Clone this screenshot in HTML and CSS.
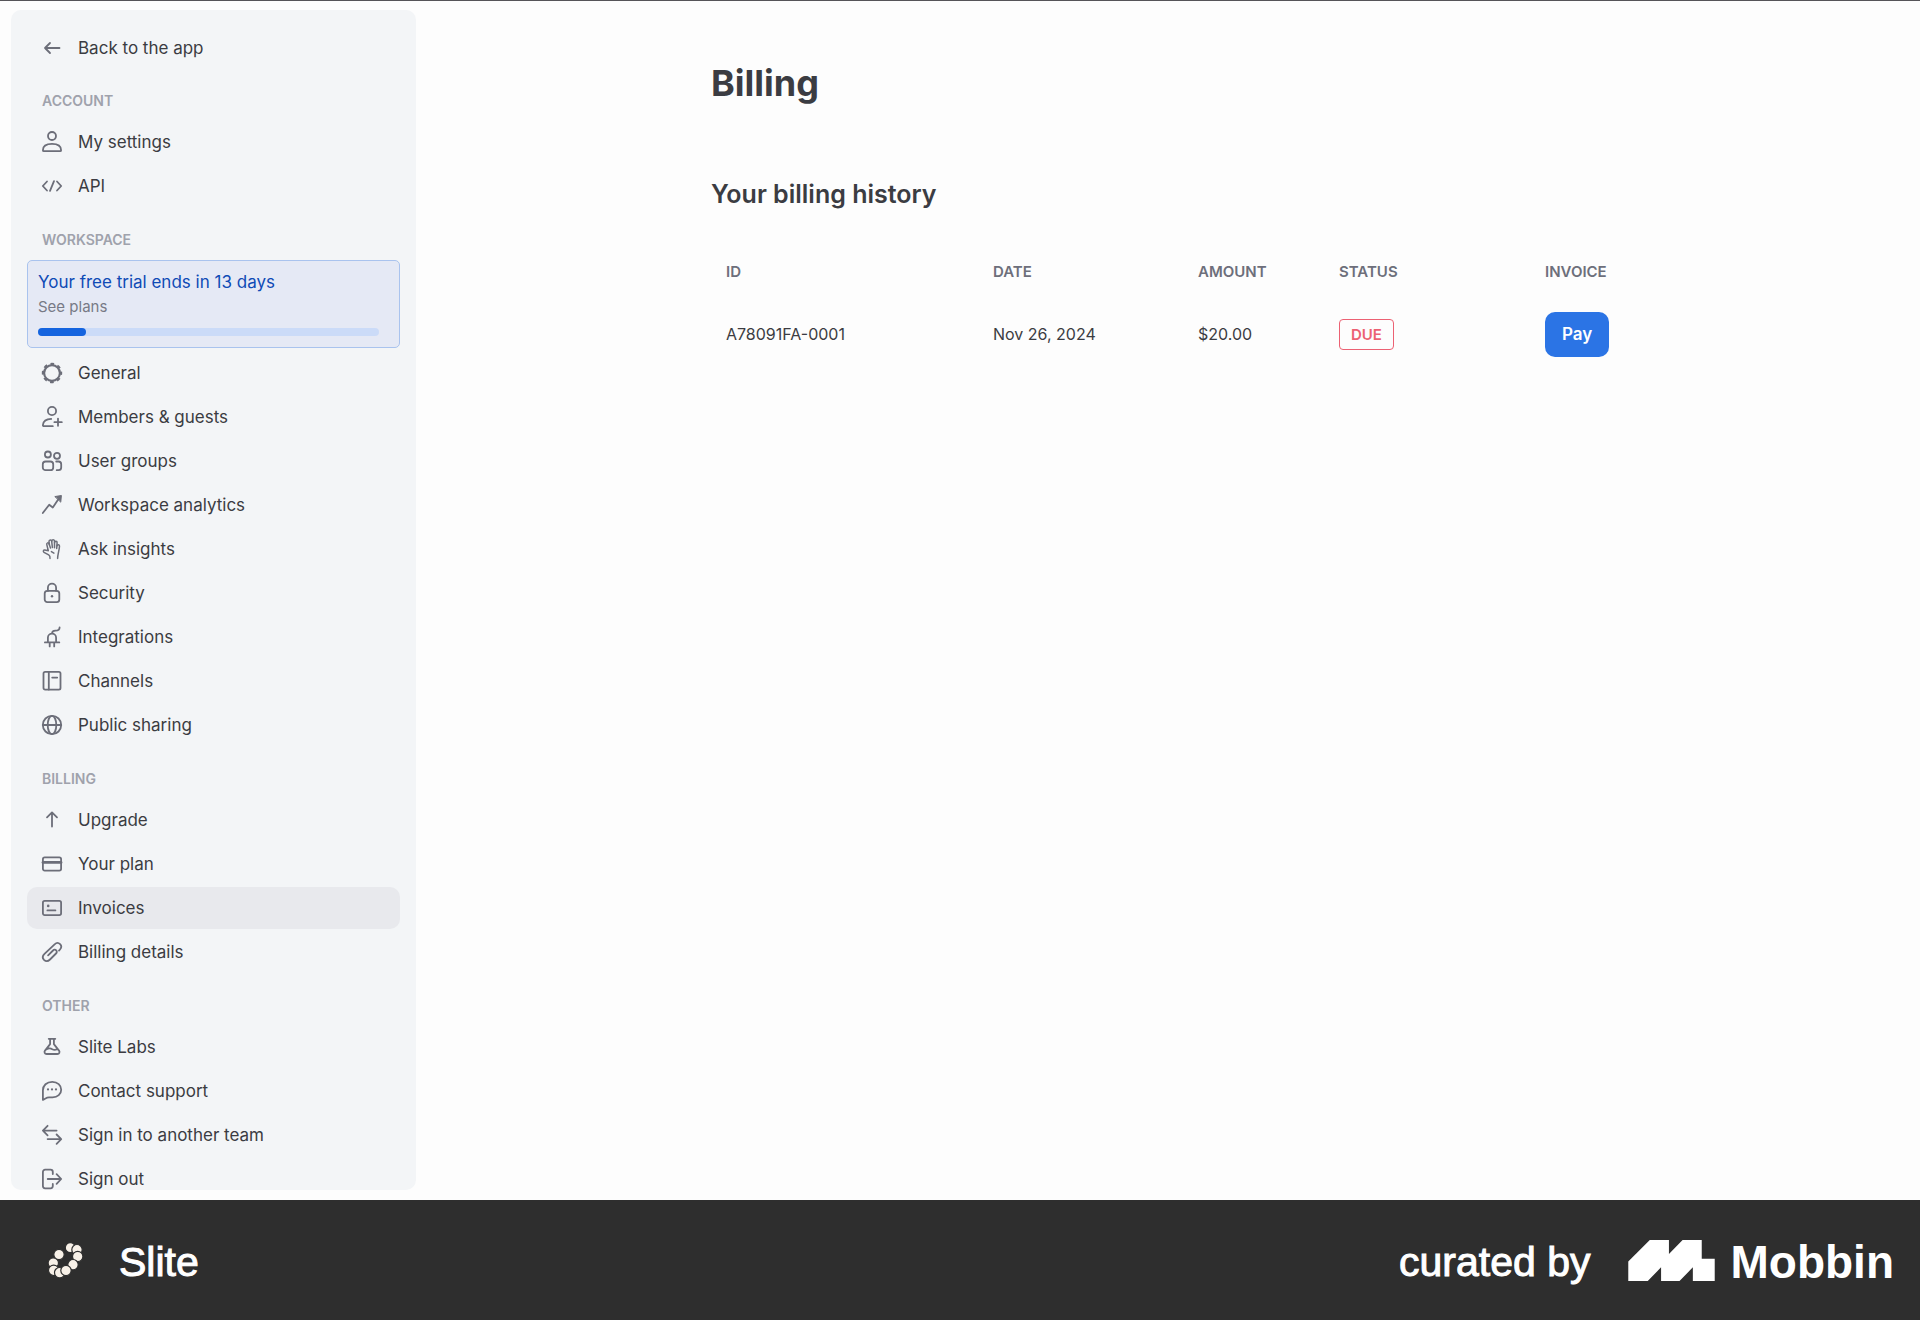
FILE: index.html
```html
<!DOCTYPE html>
<html lang="en">
<head>
    <meta charset="UTF-8">
    <meta name="viewport" content="width=device-width, initial-scale=1.0">
    <title>Billing - Slite</title>
    <link rel="stylesheet" href="styles.css">
</head>
<body>
    <div class="app">
        <nav class="sidebar">
            <a class="item" href="#">
                <svg class="icon" viewBox="0 0 20 20"><path d="M17.5 10H3M8 5l-5 5 5 5"/></svg>
                Back to the app
            </a>

            <h3>ACCOUNT</h3>
            <div class="list">
                <a class="item" href="#">
                    <svg class="icon" viewBox="0 0 20 20"><circle cx="10" cy="4" r="4"/><path d="M.9 18.2c0-3.9 3.2-6.4 9.1-6.4s9.1 2.5 9.1 6.4c0 .6-.4 1-1 1H1.9c-.6 0-1-.4-1-1z"/></svg>
                    My settings
                </a>
                <a class="item" href="#">
                    <svg class="icon" viewBox="0 0 20 20"><path d="M5 5.5L.8 10 5 14.5M15 5.5l4.2 4.5-4.2 4.5M12 5.2L8 14.8"/></svg>
                    API
                </a>
            </div>

            <h3>WORKSPACE</h3>
            <a class="trial" href="#">
                <span class="trialTitle">Your free trial ends in 13 days</span>
                <span class="trialLink">See plans</span>
                <span class="bar"><span class="barFill" style="width: 14%"></span></span>
            </a>
            <div class="list">
                <a class="item" href="#">
                    <svg class="icon" viewBox="0 0 20 20"><circle cx="10" cy="10" r="7.9" stroke-width="2.2"/><circle cx="10" cy="10" r="9.1" stroke-width="2.2" stroke-dasharray="3.6 3.55" stroke-dashoffset="1.8"/></svg>
                    General
                </a>
                <a class="item" href="#">
                    <svg class="icon" viewBox="0 0 20 20"><circle cx="10" cy="4" r="4.1"/><path d="M10.8 19.2H2c-.7 0-1.2-.4-1.1-1.2.4-3.8 3.5-6 8.3-6.1M16 11.6v7.2M12.4 15.2h7.4"/></svg>
                    Members &amp; guests
                </a>
                <a class="item" href="#">
                    <svg class="icon" viewBox="0 0 20 20"><circle cx="5.9" cy="3.5" r="3"/><circle cx="15" cy="4.8" r="3"/><rect x=".8" y="10.5" width="10.4" height="8.7" rx="2.8"/><path d="M14.2 10.5h2.3a2.7 2.7 0 0 1 2.7 2.7v3.3a2.7 2.7 0 0 1-2.7 2.7h-1.8"/></svg>
                    User groups
                </a>
                <a class="item" href="#">
                    <svg class="icon" viewBox="0 0 20 20"><path d="M.8 18l6.4-8.3 3.6 2.8L16.5 4"/><path class="solid" d="M13.2 1.500l6.200-1-.6 6.300z"/></svg>
                    Workspace analytics
                </a>
                <a class="item" href="#">
                    <svg class="icon" viewBox="0 0 20 20"><g stroke-width="1.5"><path d="M8 19.4c.2-1.600-.1-2.800-1.300-3.500L2 13.300c-1.200-.9-.6-2.400.8-2.200l3.500.6L4.800 5.600c-.4-1.900 1.700-2.400 2.300-.7L8.500 9"/><path d="M7.400 5.600L7 2.500c0-1.800 2.400-2 2.700-.2l.7 6.300"/><path d="M9.700 2.300c-.1-2.100 2.700-2.200 2.800-.2v6.700"/><path d="M12.600 3.500c.2-1.700 2.600-1.500 2.500.2L14.700 9.500"/><path d="M15 6.800c.3-1.600 2.700-1.300 2.500.4-.3 4.100-1.700 8-1.900 12.200"/><path d="M9.400 12.600l2.500 1.600"/></g></svg>
                    Ask insights
                </a>
                <a class="item" href="#">
                    <svg class="icon" viewBox="0 0 20 20"><rect x="2.700" y="7.900" width="14.600" height="11.200" rx="2.600"/><path d="M5.900 7.900V4.700a4.100 4.100 0 0 1 8.200 0v3.200"/><circle class="dot" cx="10" cy="13.300" r="1.200"/></svg>
                    Security
                </a>
                <a class="item" href="#">
                    <svg class="icon" viewBox="0 0 20 20"><path d="M2.900 15.400h14.400M5.900 15.400v-4.600a4.100 4.100 0 0 1 8.200 0v4.600M7.700 15.400v4M12.200 15.400v4M10 6.700c0-2.500 1.300-3.100 3.400-3.100 2.700 0 4.200-.6 4.200-3.200"/></svg>
                    Integrations
                </a>
                <a class="item" href="#">
                    <svg class="icon" viewBox="0 0 20 20"><rect x="1.500" y=".9" width="17" height="17.800" rx="1.600"/><path d="M6.800 1v17.600M10.200 6.600h5"/></svg>
                    Channels
                </a>
                <a class="item" href="#">
                    <svg class="icon" viewBox="0 0 20 20"><circle cx="10" cy="10" r="9.200"/><ellipse cx="10" cy="10" rx="4.300" ry="9.200"/><path d="M.8 10h18.400"/></svg>
                    Public sharing
                </a>
            </div>

            <h3>BILLING</h3>
            <div class="list">
                <a class="item" href="#">
                    <svg class="icon" viewBox="0 0 20 20"><path d="M10 16.500V2.700M5 7.400l5-5 5 5"/></svg>
                    Upgrade
                </a>
                <a class="item" href="#">
                    <svg class="icon" viewBox="0 0 20 20"><rect x=".9" y="3.400" width="18.200" height="13.200" rx="1.800"/><path d="M1 8.400h18" stroke-width="2.800"/></svg>
                    Your plan
                </a>
                <a class="item active" href="#">
                    <svg class="icon" viewBox="0 0 20 20"><rect x=".9" y="2.900" width="18.200" height="14.200" rx="1.800"/><path d="M5.400 12.400h8"/><circle class="dot" cx="6.200" cy="7.900" r="1.300"/></svg>
                    Invoices
                </a>
                <a class="item" href="#">
                    <svg class="icon" viewBox="0 0 20 20"><path d="M17 8.600l1-1.100c1.500-1.700 1.500-3.900.1-5.300-1.500-1.500-3.800-1.500-5.500.1L2.500 11.800c-1.900 1.800-2.100 4.300-.5 6 1.700 1.700 4.200 1.500 6-.3l6-6c1-1 1.100-2.300.2-3.200-.9-.9-2.200-.8-3.200.2l-4.900 4.900"/></svg>
                    Billing details
                </a>
            </div>

            <h3>OTHER</h3>
            <div class="list">
                <a class="item" href="#">
                    <svg class="icon" viewBox="0 0 20 20"><path d="M6.700 1.800h6.600M8.100 1.800v5.300L3 13.600c-1.100 1.600-.3 3.400 1.600 3.400h10.800c1.900 0 2.700-1.800 1.600-3.400l-5.100-6.500V1.800M4.600 12.300c2.400-1.500 4.500-.9 5.700-.1 1.300.8 3 .9 4.800.1"/></svg>
                    Slite Labs
                </a>
                <a class="item" href="#">
                    <svg class="icon" viewBox="0 0 20 20"><path d="M.9 18.900V9.300C.9 4.500 4.700.8 10.300.8c5.200 0 8.900 3.500 8.900 7.900s-3.600 7.700-8.600 7.700H7c-2.300 0-3.500 1.300-6.100 2.500z"/><circle class="dot" cx="6" cy="8.400" r="1.100"/><circle class="dot" cx="10" cy="8.400" r="1.100"/><circle class="dot" cx="14" cy="8.400" r="1.100"/></svg>
                    Contact support
                </a>
                <a class="item" href="#">
                    <svg class="icon" viewBox="0 0 20 20"><path d="M14.600 5.600H.9M5.600.8L.9 5.600l4.700 4.700M5.600 14.100h13.500M14.600 9.500l4.600 4.600-4.600 4.700"/></svg>
                    Sign in to another team
                </a>
                <a class="item" href="#">
                    <svg class="icon" viewBox="0 0 20 20"><path d="M10.800 5V2.900a2.200 2.200 0 0 0-2.200-2.200H3.100A2.200 2.200 0 0 0 .9 2.900v14.200a2.200 2.200 0 0 0 2.200 2.200h5.500a2.200 2.200 0 0 0 2.200-2.200V15M5.700 10h13.400M14.600 5.200l4.600 4.800-4.600 4.800"/></svg>
                    Sign out
                </a>
            </div>
        </nav>

        <main class="content">
            <div class="page">
                <h1>Billing</h1>
                <h2>Your billing history</h2>
                <table class="invoices">
                    <thead>
                        <tr>
                            <th class="colId">ID</th>
                            <th class="colDate">DATE</th>
                            <th class="colAmount">AMOUNT</th>
                            <th class="colStatus">STATUS</th>
                            <th>INVOICE</th>
                        </tr>
                    </thead>
                    <tbody>
                        <tr>
                            <td>A78091FA-0001</td>
                            <td>Nov 26, 2024</td>
                            <td>$20.00</td>
                            <td><span class="status">DUE</span></td>
                            <td><button class="pay" type="button">Pay</button></td>
                        </tr>
                    </tbody>
                </table>
            </div>
        </main>
    </div>

    <footer class="footer">
        <svg class="sliteLogo" viewBox="0 0 34 34">
            <circle cx="21.300" cy="4.700" r="5"/>
            <circle cx="28" cy="6.700" r="5.200"/>
            <circle cx="28.700" cy="13.500" r="5.200"/>
            <circle cx="24" cy="21.700" r="5.200"/>
            <circle cx="4.300" cy="20" r="5.200"/>
            <circle cx="4.700" cy="27.300" r="5.200"/>
            <circle cx="10.700" cy="29.700" r="5.200"/>
            <circle cx="17" cy="27.500" r="5.200"/>
            <circle cx="10" cy="11.500" r="5.200"/>
        </svg>
        <span class="appName">Slite</span>
        <div class="credit">
            <span class="curated">curated by</span>
            <svg class="mobbinLogo" viewBox="0 0 253 120"><path d="M0 63L63 0h56v41l40-41h56v55h38v65h-64V80l-39 40H96V80l-39 40H0z"/></svg>
            <span class="mobbin">Mobbin</span>
        </div>
    </footer>
</body>
</html>
```

FILE: styles.css
```css
* {
    box-sizing: border-box;
}

body {
    margin: 0;
    height: 100vh;
    display: flex;
    flex-direction: column;
    background-color: #fdfdfd;
    border-top: 1px solid #555458;
    color: #3b3c42;
    font-family: Inter, "Liberation Sans", sans-serif;
    font-size: 17px;
}

a {
    color: inherit;
    text-decoration: none;
}

.app {
    flex: 1;
    min-height: 0;
    display: flex;
}

/* sidebar */
.sidebar {
    flex: none;
    width: 405px;
    margin: 9px 0 10px 11px;
    padding: 17px 16px 0;
    background-color: #f3f5f7;
    border-radius: 10px;
    overflow-y: auto;
    scrollbar-width: none;
}

.sidebar h3 {
    margin: 22px 15px 10px;
    font-size: 14px;
    line-height: 20px;
    font-weight: 600;
    color: #9fa2ac;
}

.list {
    display: flex;
    flex-direction: column;
    gap: 2px;
}

.list + h3 {
    margin-top: 23px;
}

.item {
    display: flex;
    align-items: center;
    gap: 16px;
    height: 42px;
    padding: 0 15px;
    border-radius: 10px;
}

.item:hover,
.item.active {
    background-color: #e8e9ed;
}

.icon {
    flex: none;
    width: 20px;
    height: 20px;
    overflow: visible;
    fill: none;
    stroke: #6c6e79;
    stroke-width: 1.8;
    stroke-linecap: round;
    stroke-linejoin: round;
}

.icon circle[stroke-dasharray] {
    stroke-linecap: butt;
}

.icon .dot {
    fill: #6c6e79;
    stroke: none;
}

.icon .solid {
    fill: #6c6e79;
    stroke-width: 1;
}

.trial {
    display: flex;
    flex-direction: column;
    height: 88px;
    margin-bottom: 4px;
    padding: 8px 20px 0 10px;
    background-color: #e5e9f5;
    border: 1px solid #a9c3ee;
    border-radius: 5px;
}

.trialTitle {
    line-height: 26px;
    color: #0f4bb6;
}

.trialLink {
    font-size: 15px;
    line-height: 24px;
    color: #777a86;
}

.bar {
    height: 8px;
    margin-top: 9px;
    border-radius: 4px;
    background-color: #cbdbf8;
}

.barFill {
    display: block;
    height: 8px;
    border-radius: 4px;
    background-color: #1564df;
}

/* billing page */
.content {
    flex: 1;
    min-width: 0;
    overflow-y: auto;
}

.page {
    max-width: 914px;
    margin: 0 auto;
    padding-top: 58px;
}

h1 {
    margin: 0;
    font-size: 36px;
    line-height: 48px;
    font-weight: 700;
}

h2 {
    margin: 70px 0 0;
    font-size: 25px;
    line-height: 34px;
    font-weight: 600;
}

.invoices {
    width: 100%;
    margin-top: 35px;
    table-layout: fixed;
    border-collapse: collapse;
    text-align: left;
}

.invoices th {
    height: 50px;
    padding: 0 0 0 15px;
    font-size: 15px;
    font-weight: 600;
    color: #6d6f7b;
}

.invoices td {
    height: 76px;
    padding: 0 0 0 15px;
    font-size: 16px;
}

.colId {
    width: 267px;
}

.colDate {
    width: 205px;
}

.colAmount {
    width: 141px;
}

.colStatus {
    width: 206px;
}

.status {
    display: inline-block;
    padding: 0 11px;
    border: 1px solid #ec6173;
    border-radius: 4px;
    font-size: 15px;
    line-height: 29px;
    font-weight: 600;
    color: #ec6173;
}

.pay {
    height: 45px;
    padding: 0 17px;
    border: none;
    border-radius: 10px;
    background-color: #2b74e5;
    color: #fff;
    font-family: inherit;
    font-size: 17px;
    font-weight: 600;
    cursor: pointer;
}

/* footer */
.footer {
    flex: none;
    display: flex;
    align-items: center;
    height: 120px;
    padding: 0 26px 0 49px;
    background-color: #2e2e2e;
    color: #fff;
    font-family: "Liberation Sans", Arial, sans-serif;
    font-size: 41px;
}

.footer span {
    padding-top: 4px;
}

.sliteLogo {
    width: 34px;
    height: 34px;
    overflow: visible;
    fill: #f8f1e8;
    stroke: #2e2e2e;
    stroke-width: 1.2;
}

.appName {
    margin-left: 36px;
}

.appName,
.curated {
    -webkit-text-stroke: 1px #fff;
}

.credit {
    display: flex;
    align-items: center;
    margin-left: auto;
}

.mobbinLogo {
    width: 87px;
    height: 41px;
    margin: 0 16px 0 37px;
    fill: #fff;
}

.mobbin {
    font-size: 46px;
    font-weight: 700;
}
```
